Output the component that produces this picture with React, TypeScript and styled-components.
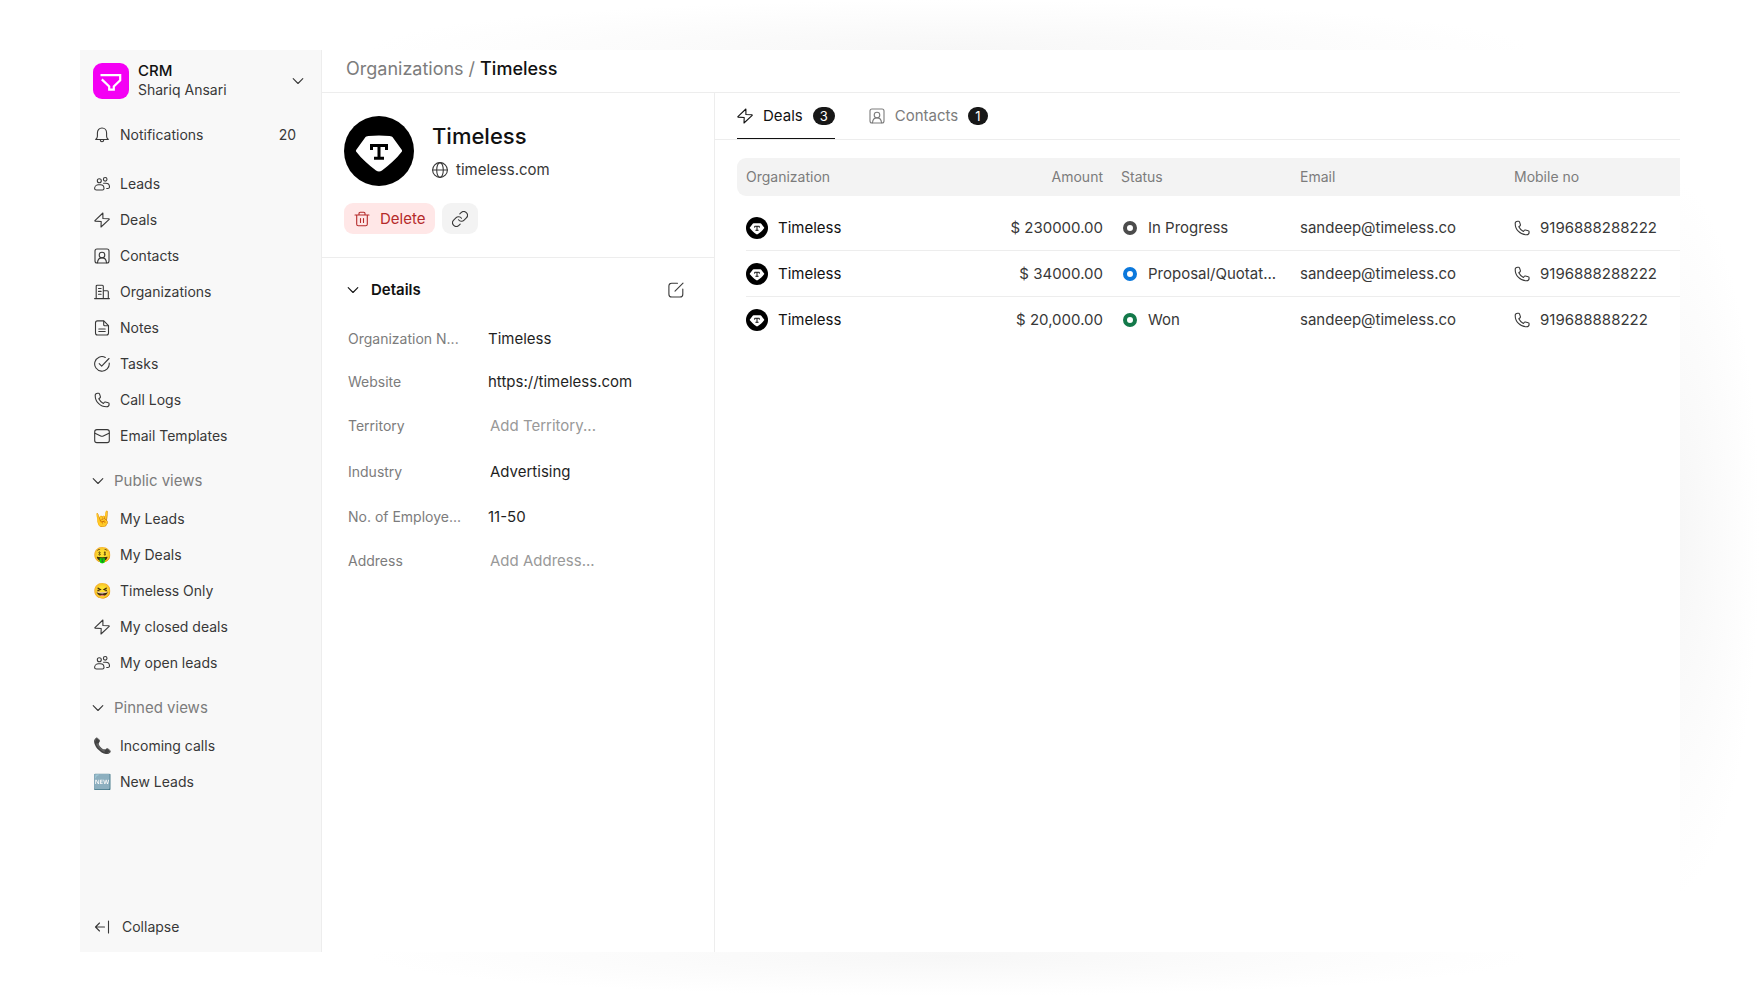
import React from "react";
import styled, { createGlobalStyle, css } from "styled-components";

const GlobalStyle = createGlobalStyle`
  *, *::before, *::after { box-sizing: border-box; }
  body {
    margin: 0;
    background: #ffffff;
    color: #383838;
    font-family: Inter, "Liberation Sans", sans-serif;
    font-size: 15px;
    line-height: 20px;
  }
  button, input, select { font: inherit; color: inherit; }
  button { border: 0; background: none; padding: 0; cursor: pointer; text-align: left; }
  a { color: inherit; text-decoration: none; }
`;

/* ---------- icons ---------- */

const Svg = styled.svg<{ $size?: number }>`
  flex: none;
  display: block;
  width: ${(p) => p.$size ?? 16}px;
  height: ${(p) => p.$size ?? 16}px;
  fill: none;
  stroke: currentColor;
  stroke-width: 1.1;
  stroke-linecap: round;
  stroke-linejoin: round;
`;

type IconProps = { size?: number };

const icon = (paths: React.ReactNode) =>
  function Icon({ size }: IconProps) {
    return (
      <Svg $size={size} viewBox="0 0 16 16" aria-hidden="true">
        {paths}
      </Svg>
    );
  };

const BellIcon = icon(
  <>
    <path d="M1.700 12.500c1-.9 1.700-2 1.700-3.300V6C3.400 3 5.300 1 8 1s4.600 2 4.600 5v3.200c0 1.300.7 2.400 1.700 3.300z" />
    <path d="M6.200 12.700c.1 1.300.8 2 1.800 2s1.700-.7 1.800-2" />
  </>
);
const LeadsIcon = icon(
  <>
    <circle cx="5.300" cy="4.700" r="2" />
    <circle cx="11.200" cy="3.300" r="1.800" />
    <path d="M2.500 14h6c1 0 1.500-.6 1.500-1.500 0-2.200-1.600-3.700-3.500-3.700h-2C2.500 8.800.6 10.300.6 12.500c0 .9.700 1.500 1.900 1.500z" />
    <path d="M9.600 7.300h2.200c2.200 0 3.700 1.600 3.700 3.700 0 1-.7 1.500-1.600 1.500h-1.200" />
  </>
);
const BoltIcon = icon(
  <path d="M8.900 1 .9 8.600c-.2.200-.1.500.2.500L7.200 9.500 7 15l8.200-7.700c.2-.2.1-.5-.2-.5L8.900 6.500z" />
);
const ContactIcon = icon(
  <>
    <rect x="1" y="1" width="14" height="14" rx="2" />
    <circle cx="8" cy="7" r="2.800" />
    <path d="M3.500 14.700c.2-2.900 2.100-4.800 4.500-4.800s4.300 1.900 4.500 4.800" />
  </>
);
const OrganizationIcon = icon(
  <>
    <path d="M.6 14.600h14.800M2.200 14.500V2.200c0-.6.400-1 1-1h5.100c.6 0 1 .4 1 1v12.300M9.300 6.800h4c.6 0 1 .4 1 1v6.700" />
    <path d="M4.500 4.500h2.600M4.500 7.400h2.600M4.500 10.300h2.600" />
  </>
);
const NoteIcon = icon(
  <>
    <path d="M3.500.9h6.300l4.700 4.800v7.300c0 1.200-.8 2-2 2h-9c-1.200 0-2-.8-2-2V2.900c0-1.200.8-2 2-2z" />
    <path d="M9.700 1.200v3.600c0 .6.400 1 1 1h3.600M4.800 9h6.400M4.800 11.500h6.400" />
  </>
);
const TaskIcon = icon(
  <>
    <path d="M11.300 1.400A7.300 7.300 0 1 0 15.200 7" />
    <path d="m5.200 7.700 2.500 2.500 7.300-7.700" />
  </>
);
const PhoneIcon = icon(
  <path d="M1.200 3.400c0 6.300 5 11.400 11.300 11.400 1.500 0 2.600-1.200 2.600-2.600v-.4c0-.5-.3-.9-.8-1l-3-.8c-.4-.1-.8 0-1 .3l-.9 1.100c-2-.9-3.600-2.500-4.600-4.600l1.300-1c.3-.3.4-.7.3-1.100l-.9-2.800c-.1-.4-.5-.7-1-.7h-.8c-1.400 0-2.500 1-2.500 2.200z" />
);
const MailIcon = icon(
  <>
    <rect x=".7" y="1.600" width="14.600" height="13" rx="2.200" />
    <path d="m1 5.200 5.700 2.700c.8.400 1.800.4 2.600 0L15 5.200" />
  </>
);
const CollapseIcon = icon(<path d="M10.500 8H1.500M5.500 4 1.500 8l4 4M14.500 2v12" />);
const ChevronIcon = icon(<path d="m3.200 5.700 4.800 4.800 4.800-4.800" />);
const GlobeIcon = icon(
  <>
    <circle cx="8" cy="8" r="7.400" />
    <ellipse cx="8" cy="8" rx="3.300" ry="7.400" />
    <path d="M.6 8h14.800" />
  </>
);
const TrashIcon = icon(
  <>
    <path d="M1 4h14M2.700 4v9.200c0 .9.700 1.600 1.600 1.600h7.400c.9 0 1.600-.7 1.600-1.600V4M5 4V2.500c0-.7.500-1.200 1.200-1.200h3.600c.7 0 1.200.5 1.200 1.200V4" />
    <path d="M6.500 7.500v4M9.500 7.500v4" />
  </>
);
const LinkIcon = icon(
  <g transform="translate(-0.900 -0.900) scale(0.742)" strokeWidth="1.500">
    <path d="M10 13a5 5 0 0 0 7.540.54l3-3a5 5 0 0 0-7.070-7.070l-1.720 1.710" />
    <path d="M14 11a5 5 0 0 0-7.540-.54l-3 3a5 5 0 0 0 7.070 7.070l1.710-1.710" />
  </g>
);
const EditIcon = icon(
  <>
    <path d="M9.500 1.200H3.700C2.100 1.200.9 2.400.9 4v8.200C.9 13.800 2.100 15 3.700 15H12c1.600 0 2.800-1.200 2.800-2.800V7" />
    <path d="M7 9.200 15 1.200" />
  </>
);

const CrmLogo = () => (
  <Svg $size={36} viewBox="0 0 36 36" aria-hidden="true">
    <rect width="36" height="36" rx="9" fill="#f400f4" stroke="none" />
    <path
      d="M7.500 12.200h19.700v5l-6.400 6.200v3.200h-4.600v-3.200l-7.400-7"
      stroke="#ffffff"
      strokeWidth="2.200"
      strokeLinecap="butt"
      strokeLinejoin="miter"
    />
  </Svg>
);

const TimelessLogo = ({ size }: { size: number }) => (
  <Svg $size={size} viewBox="0 0 70 70" aria-hidden="true">
    <circle cx="35" cy="35" r="35" fill="#000000" stroke="none" />
    <path
      d="M24.500 20q10.500-.8 21 0c1.700.1 2.800.6 3.700 1.900l8.500 11.800c.6.900.5 1.600-.2 2.400-5.300 6.700-11.500 12.700-19.500 18.300-2 1.300-4 1.300-6 0-8-5.600-14.200-11.600-19.500-18.300-.7-.8-.8-1.500-.2-2.400l8.500-11.800c.9-1.300 2-1.800 3.700-1.900z"
      fill="#ffffff"
      stroke="none"
    />
    <path
      d="M27.500 34v-4.500h15V34M35 29.500v12.800M30 42.300h10"
      stroke="#000000"
      strokeWidth="3"
      strokeLinecap="butt"
      strokeLinejoin="miter"
    />
  </Svg>
);

/* ---------- page and window ---------- */

const Page = styled.div`
  min-height: 100vh;
  padding: 50px 80px 44px;
  display: flex;
  background:
    radial-gradient(ellipse 33% 5% at 54% 5%, #f7f7f7, transparent),
    radial-gradient(ellipse 33% 4% at 54% 96%, #f7f7f7, transparent),
    radial-gradient(ellipse 5% 36% at 95% 54%, #f6f6f6, transparent),
    #ffffff;
`;

const Window = styled.div`
  flex: 1;
  min-width: 0;
  display: flex;
  background: #ffffff;
`;

/* ---------- sidebar ---------- */

const Sidebar = styled.aside`
  flex: none;
  width: 242px;
  display: flex;
  flex-direction: column;
  padding: 12px 12px 8px;
  background: #f8f8f8;
  border-right: 1px solid #ededed;
  font-size: 14px;
`;

const Account = styled.button`
  display: flex;
  align-items: center;
  gap: 9px;
  padding: 0 3px 0 1px;
  color: #383838;
`;

const AccountText = styled.span`
  flex: 1;
  display: flex;
  flex-direction: column;
`;

const AppName = styled.span`
  font-size: 15px;
  line-height: 18px;
  font-weight: 500;
  color: #111111;
`;

const UserName = styled.span`
  line-height: 20px;
`;

const Nav = styled.nav`
  display: flex;
  flex-direction: column;
`;

const NavItem = styled.a`
  display: flex;
  align-items: center;
  gap: 10px;
  height: 36px;
  padding: 0 13px 0 2px;
`;

const NotificationsNav = styled(Nav)`
  margin: 17px 0 13px;
`;

const Count = styled.span`
  margin-left: auto;
`;

const Emoji = styled.span`
  width: 16px;
  display: flex;
  justify-content: center;
  font-size: 15px;
`;

const SectionTitle = styled.button`
  display: flex;
  align-items: center;
  gap: 8px;
  height: 36px;
  margin: 9px 0 2px -2px;
  font-size: 15px;
  color: #7c7c7c;

  svg { color: #383838; }
`;

const Collapse = styled.button`
  display: flex;
  align-items: center;
  gap: 12px;
  height: 34px;
  margin-top: auto;
  padding-left: 2px;
`;

/* ---------- main area ---------- */

const Main = styled.main`
  flex: 1;
  min-width: 0;
  display: flex;
  flex-direction: column;
`;

const Breadcrumbs = styled.header`
  display: flex;
  align-items: center;
  gap: 5px;
  height: 43px;
  padding: 0 24px 4px;
  border-bottom: 1px solid #ededed;
  font-size: 18px;
  color: #7c7c7c;

  strong { font-weight: 500; color: #111111; }
`;

const Columns = styled.div`
  flex: 1;
  display: flex;
`;

const Panel = styled.section`
  flex: none;
  width: 393px;
  border-right: 1px solid #ededed;
`;

const Summary = styled.div`
  display: flex;
  flex-direction: column;
  gap: 17px;
  padding: 23px 22px;
  border-bottom: 1px solid #ededed;
`;

const Identity = styled.div`
  display: flex;
  align-items: center;
  gap: 18px;
`;

const IdentityText = styled.div`
  display: flex;
  flex-direction: column;
  gap: 10px;
`;

const Title = styled.h1`
  margin: 0;
  font-size: 22px;
  line-height: 28px;
  font-weight: 500;
  color: #111111;
`;

const SiteLink = styled.a`
  display: flex;
  align-items: center;
  gap: 8px;
`;

const Actions = styled.div`
  display: flex;
  gap: 7px;
`;

const ActionButton = styled.button<{ $danger?: boolean }>`
  display: flex;
  align-items: center;
  gap: 10px;
  height: 31px;
  padding: 0 10px;
  border-radius: 9px;
  background: #f3f3f3;

  ${(p) =>
    p.$danger &&
    css`
      background: #ffe7e7;
      color: #b52a2a;
    `}
`;

const DetailsHeader = styled.div`
  display: flex;
  align-items: center;
  justify-content: space-between;
  height: 59px;
  padding: 4px 30px 0 23px;
`;

const DetailsToggle = styled.button`
  display: flex;
  align-items: center;
  gap: 10px;
  font-weight: 600;
  color: #111111;
`;

const Field = styled.label<{ $link?: boolean }>`
  display: flex;
  align-items: center;
  height: ${(p) => (p.$link ? 46 : 43)}px;
  padding: 0 30px 0 26px;
`;

const FieldLabel = styled.span`
  width: 118px;
  flex: none;
  font-size: 14px;
  color: #7c7c7c;
  white-space: nowrap;
`;

const FieldInput = styled.input<{ $link?: boolean }>`
  flex: 1;
  min-width: 0;
  margin-left: 22px;
  padding: 0 0 0 ${(p) => (p.$link ? 2 : 0)}px;
  border: 0;
  background: none;
  color: #1f1f1f;
  outline: 0;

  &::placeholder { color: #999999; opacity: 1; }
`;

/* ---------- deals ---------- */

const Content = styled.section`
  flex: 1;
  min-width: 0;
  display: flex;
  flex-direction: column;
`;

const Tabs = styled.div`
  display: flex;
  gap: 34px;
  height: 47px;
  padding: 0 22px;
  border-bottom: 1px solid #ededed;
`;

const Tab = styled.button<{ $active?: boolean }>`
  display: flex;
  align-items: center;
  gap: 10px;
  padding-top: 1px;
  color: ${(p) => (p.$active ? "#111111" : "#7c7c7c")};
  border-bottom: 1px solid ${(p) => (p.$active ? "#111111" : "transparent")};
`;

const Badge = styled.span`
  height: 18px;
  padding: 0 7px;
  border-radius: 9px;
  background: #171717;
  color: #ffffff;
  font-size: 13px;
  line-height: 18px;
`;

const TableArea = styled.div`
  padding: 18px 0 0 22px;
  overflow: hidden;
`;

const Table = styled.table`
  width: 100%;
  table-layout: fixed;
  border-collapse: separate;
  border-spacing: 0;

  tbody::before { content: ""; display: block; height: 9px; }
`;

const Col = styled.col<{ $width?: number }>`
  ${(p) => p.$width && css`width: ${p.$width}px;`}
`;

const HeadCell = styled.th<{ $right?: boolean }>`
  height: 38px;
  padding: 0 9px;
  background: #f3f3f3;
  font-size: 14px;
  font-weight: 400;
  color: #7c7c7c;
  text-align: ${(p) => (p.$right ? "right" : "left")};

  &:first-child { border-radius: 9px 0 0 9px; }
`;

const Cell = styled.td`
  padding: 0;

  &:first-child { padding-left: 9px; }
`;

const CellContent = styled.div<{ $right?: boolean; $flush?: boolean; $last?: boolean }>`
  display: flex;
  align-items: center;
  justify-content: ${(p) => (p.$right ? "flex-end" : "flex-start")};
  gap: 10px;
  height: 46px;
  padding: 0 ${(p) => (p.$flush ? 0 : 9)}px;
  border-bottom: 1px solid ${(p) => (p.$last ? "transparent" : "#ededed")};
  white-space: nowrap;
`;

const OrgName = styled.span`
  color: #111111;
`;

const StatusRing = styled.span<{ $color: string }>`
  flex: none;
  width: 14px;
  height: 14px;
  margin: 0 1px 0 2px;
  border: 4px solid ${(p) => p.$color};
  border-radius: 50%;
`;

/* ---------- data ---------- */

type Entry = { label: string; icon: React.ReactNode };

const mainNav: Entry[] = [
  { label: "Leads", icon: <LeadsIcon /> },
  { label: "Deals", icon: <BoltIcon /> },
  { label: "Contacts", icon: <ContactIcon /> },
  { label: "Organizations", icon: <OrganizationIcon /> },
  { label: "Notes", icon: <NoteIcon /> },
  { label: "Tasks", icon: <TaskIcon /> },
  { label: "Call Logs", icon: <PhoneIcon /> },
  { label: "Email Templates", icon: <MailIcon /> },
];

const publicViews: Entry[] = [
  { label: "My Leads", icon: <Emoji>🤘</Emoji> },
  { label: "My Deals", icon: <Emoji>🤑</Emoji> },
  { label: "Timeless Only", icon: <Emoji>😆</Emoji> },
  { label: "My closed deals", icon: <BoltIcon /> },
  { label: "My open leads", icon: <LeadsIcon /> },
];

const pinnedViews: Entry[] = [
  { label: "Incoming calls", icon: <Emoji>📞</Emoji> },
  { label: "New Leads", icon: <Emoji>🆕</Emoji> },
];

const fields = [
  { label: "Organization N...", value: "Timeless" },
  { label: "Website", value: "https://timeless.com" },
  { label: "Territory", placeholder: "Add Territory...", link: true },
  { label: "Industry", value: "Advertising", link: true },
  { label: "No. of Employe...", value: "11-50" },
  { label: "Address", placeholder: "Add Address...", link: true },
];

const deals = [
  { amount: "$ 230000.00", status: "In Progress", color: "#4c4c4c", phone: "9196888288222" },
  { amount: "$ 34000.00", status: "Proposal/Quotat...", color: "#0b78dc", phone: "9196888288222" },
  { amount: "$ 20,000.00", status: "Won", color: "#13794a", phone: "919688888222" },
];

const NavList = ({ items, label }: { items: Entry[]; label: string }) => (
  <Nav aria-label={label}>
    {items.map((item) => (
      <NavItem href="#" key={item.label}>
        {item.icon}
        <span>{item.label}</span>
      </NavItem>
    ))}
  </Nav>
);

export default function App() {
  return (
    <>
      <GlobalStyle />
      <Page>
        <Window>
          <Sidebar>
            <Account type="button">
              <CrmLogo />
              <AccountText>
                <AppName>CRM</AppName>
                <UserName>Shariq Ansari</UserName>
              </AccountText>
              <ChevronIcon />
            </Account>
            <NotificationsNav aria-label="Notifications">
              <NavItem href="#">
                <BellIcon />
                <span>Notifications</span>
                <Count>20</Count>
              </NavItem>
            </NotificationsNav>
            <NavList items={mainNav} label="Main" />
            <SectionTitle type="button">
              <ChevronIcon />
              Public views
            </SectionTitle>
            <NavList items={publicViews} label="Public views" />
            <SectionTitle type="button">
              <ChevronIcon />
              Pinned views
            </SectionTitle>
            <NavList items={pinnedViews} label="Pinned views" />
            <Collapse type="button">
              <CollapseIcon />
              Collapse
            </Collapse>
          </Sidebar>

          <Main>
            <Breadcrumbs>
              <a href="#">Organizations</a>
              <span>/</span>
              <strong>Timeless</strong>
            </Breadcrumbs>
            <Columns>
              <Panel>
                <Summary>
                  <Identity>
                    <TimelessLogo size={70} />
                    <IdentityText>
                      <Title>Timeless</Title>
                      <SiteLink href="#">
                        <GlobeIcon />
                        timeless.com
                      </SiteLink>
                    </IdentityText>
                  </Identity>
                  <Actions>
                    <ActionButton type="button" $danger>
                      <TrashIcon />
                      Delete
                    </ActionButton>
                    <ActionButton type="button" aria-label="Open website">
                      <LinkIcon />
                    </ActionButton>
                  </Actions>
                </Summary>
                <DetailsHeader>
                  <DetailsToggle type="button">
                    <ChevronIcon />
                    Details
                  </DetailsToggle>
                  <button type="button" aria-label="Edit details">
                    <EditIcon />
                  </button>
                </DetailsHeader>
                {fields.map((f) => (
                  <Field key={f.label} $link={f.link}>
                    <FieldLabel>{f.label}</FieldLabel>
                    <FieldInput
                      type="text"
                      $link={f.link}
                      defaultValue={f.value}
                      placeholder={f.placeholder}
                    />
                  </Field>
                ))}
              </Panel>

              <Content>
                <Tabs role="tablist">
                  <Tab type="button" role="tab" aria-selected="true" $active>
                    <BoltIcon />
                    Deals
                    <Badge>3</Badge>
                  </Tab>
                  <Tab type="button" role="tab" aria-selected="false">
                    <ContactIcon />
                    Contacts
                    <Badge>1</Badge>
                  </Tab>
                </Tabs>
                <TableArea>
                  <Table>
                    <colgroup>
                      <Col />
                      <Col $width={160} />
                      <Col $width={179} />
                      <Col $width={214} />
                      <Col $width={175} />
                    </colgroup>
                    <thead>
                      <tr>
                        <HeadCell>Organization</HeadCell>
                        <HeadCell $right>Amount</HeadCell>
                        <HeadCell>Status</HeadCell>
                        <HeadCell>Email</HeadCell>
                        <HeadCell>Mobile no</HeadCell>
                      </tr>
                    </thead>
                    <tbody>
                      {deals.map((d, i) => {
                        const last = i === deals.length - 1;
                        return (
                          <tr key={d.status}>
                            <Cell>
                              <CellContent $flush $last={last}>
                                <TimelessLogo size={22} />
                                <OrgName>Timeless</OrgName>
                              </CellContent>
                            </Cell>
                            <Cell>
                              <CellContent $right $last={last}>{d.amount}</CellContent>
                            </Cell>
                            <Cell>
                              <CellContent $last={last}>
                                <StatusRing $color={d.color} />
                                {d.status}
                              </CellContent>
                            </Cell>
                            <Cell>
                              <CellContent $last={last}>sandeep@timeless.co</CellContent>
                            </Cell>
                            <Cell>
                              <CellContent $last={last}>
                                <PhoneIcon />
                                {d.phone}
                              </CellContent>
                            </Cell>
                          </tr>
                        );
                      })}
                    </tbody>
                  </Table>
                </TableArea>
              </Content>
            </Columns>
          </Main>
        </Window>
      </Page>
    </>
  );
}
